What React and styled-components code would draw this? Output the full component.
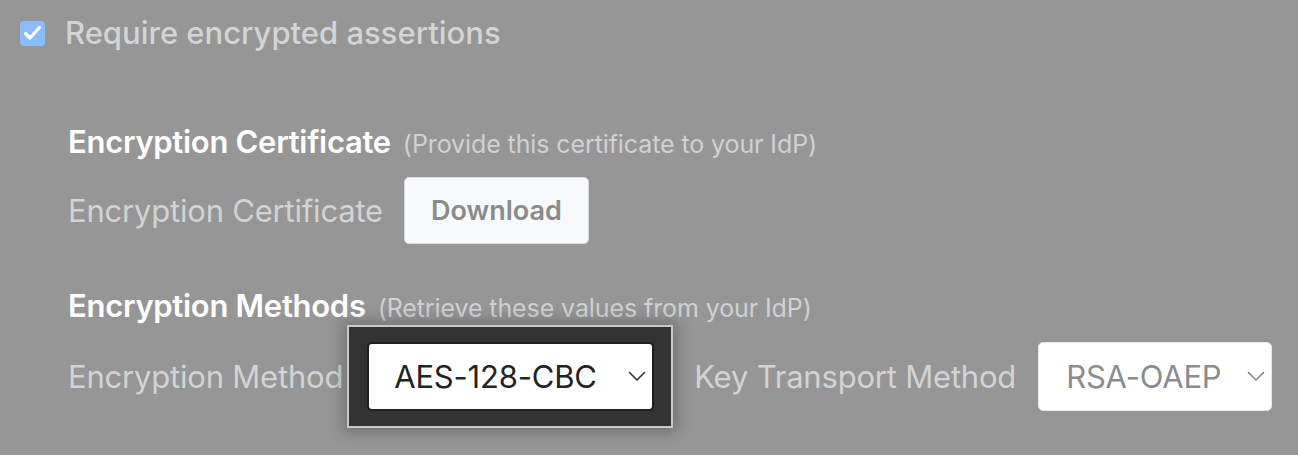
import React from 'react';
import styled, { createGlobalStyle } from 'styled-components';

const GlobalStyle = createGlobalStyle`
  html, body {
    margin: 0;
    padding: 0;
    background: #969696;
  }
  body {
    font-family: Inter, "Noto Sans", "Liberation Sans", sans-serif;
  }
`;

const Page = styled.div`
  width: 1298px;
  height: 455px;
  overflow: hidden;
  background: #969696;
  padding: 20px 0 0 20px;
  box-sizing: border-box;
`;

const CheckRow = styled.label`
  display: flex;
  align-items: center;
  gap: 20px;
  height: 26px;
`;

const CheckBox = styled.span`
  width: 25px;
  height: 25px;
  border-radius: 4px;
  background: #8abdfc;
  display: flex;
  align-items: center;
  justify-content: center;
`;

const CheckText = styled.span`
  font-size: 31px;
  line-height: 36px;
  font-weight: 500;
  color: #d3d4d6;
  letter-spacing: 0;
`;

const Section = styled.div`
  padding-left: 48px;
  margin-top: 78px;
`;

const Heading = styled.div`
  display: flex;
  align-items: baseline;
  gap: 12px;
  height: 36px;
  margin-top: ${p => p.$top || 0}px;
`;

const HeadingTitle = styled.span`
  font-size: 31px;
  line-height: 36px;
  font-weight: 600;
  color: #ffffff;
  letter-spacing: -0.3px;
`;

const HeadingNote = styled.span`
  font-size: 25px;
  color: #d0d1d3;
  letter-spacing: -0.1px;
`;

const FieldRow = styled.div`
  display: flex;
  align-items: center;
  height: 68px;
  margin-top: ${p => p.$top || 0}px;
`;

const FieldLabel = styled.span`
  font-size: 31px;
  color: #d2d3d5;
  letter-spacing: -0.2px;
  margin-right: ${p => p.$gap || 21}px;
`;

const Button = styled.button`
  height: 67px;
  padding: 0 26px;
  border: 1px solid #d9dadc;
  border-radius: 5px;
  background: #f8f9fb;
  font-family: inherit;
  font-size: 27px;
  font-weight: 600;
  color: #8a8b8d;
`;

const Spotlight = styled.div`
  margin: 0 21px 0 -20px;
  padding: 15px 17px 15px 18px;
  background: #333333;
  border: 2px solid #c9c9c9;
  box-shadow: 0 0 14px 4px rgba(0, 0, 0, 0.25);
  position: relative;
  z-index: 1;
`;

const Select = styled.div`
  display: flex;
  align-items: center;
  justify-content: space-between;
  box-sizing: border-box;
  width: ${p => p.$width}px;
  height: 69px;
  padding: 0 6px 0 ${p => (p.$active ? 25 : 27)}px;
  background: #ffffff;
  border-radius: 5px;
  border: ${p => (p.$active ? '2px solid #1f1f1f' : '1px solid #e6e6e6')};
  font-size: 31px;
  color: ${p => (p.$active ? '#222325' : '#8b8c8e')};
  letter-spacing: -0.2px;
`;

const Chevron = ({ color }) => (
  <svg width="18" height="11" viewBox="0 0 18 11" fill="none">
    <path d="M1.5 1.5 L9 9 L16.5 1.5" stroke={color} strokeWidth="1.6" strokeLinecap="round" strokeLinejoin="round" />
  </svg>
);

export default function App() {
  return (
    <Page>
      <GlobalStyle />
      <CheckRow>
        <CheckBox>
          <svg width="19" height="16" viewBox="0 0 19 16" fill="none">
            <path d="M2.5 8.5 L7 13 L16.5 2.5" stroke="#ffffff" strokeWidth="3.2" strokeLinecap="round" strokeLinejoin="round" />
          </svg>
        </CheckBox>
        <CheckText>Require encrypted assertions</CheckText>
      </CheckRow>

      <Section>
        <Heading>
          <HeadingTitle>Encryption Certificate</HeadingTitle>
          <HeadingNote>(Provide this certificate to your IdP)</HeadingNote>
        </Heading>
        <FieldRow $top={16}>
          <FieldLabel>Encryption Certificate</FieldLabel>
          <Button>Download</Button>
        </FieldRow>

        <Heading $top={44}>
          <HeadingTitle>Encryption Methods</HeadingTitle>
          <HeadingNote>(Retrieve these values from your IdP)</HeadingNote>
        </Heading>
        <FieldRow $top={18}>
          <FieldLabel $gap={24}>Encryption Method</FieldLabel>
          <Spotlight>
            <Select $active $width={287}>
              AES-128-CBC
              <Chevron color="#333" />
            </Select>
          </Spotlight>
          <FieldLabel $gap={22}>Key Transport Method</FieldLabel>
          <Select $width={234}>
            RSA-OAEP
            <Chevron color="#888" />
          </Select>
        </FieldRow>
      </Section>
    </Page>
  );
}
